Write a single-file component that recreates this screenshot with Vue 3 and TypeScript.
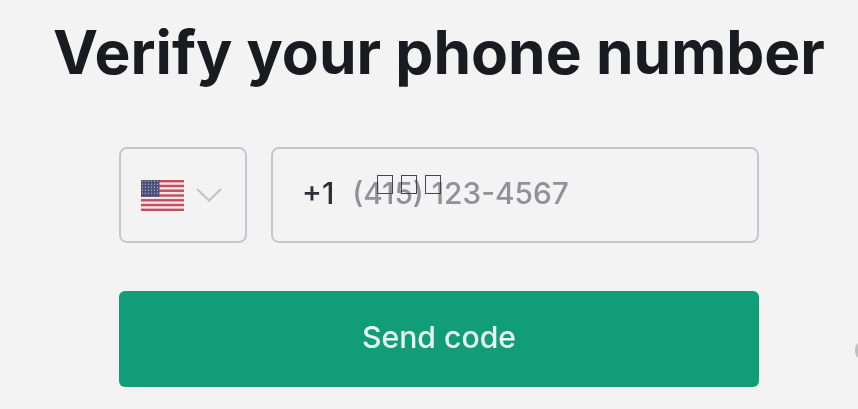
<script setup lang="ts">
const flagStripes: number[] = [0, 2, 4, 6, 8, 10, 12]
const stars: { x: number; y: number }[] = []
for (let r = 0; r < 5; r++) {
  for (let c = 0; c < 6; c++) {
    stars.push({ x: 1.4 + c * 3, y: 1.2 + r * 3 })
  }
}
</script>

<template>
  <main class="page">
    <h1 class="title">Verify your phone number</h1>
    <form class="form" @submit.prevent>
      <div class="row">
        <button type="button" class="country" aria-label="Country">
          <svg class="flag" viewBox="0 0 43 31" width="43" height="31" aria-hidden="true">
            <rect width="43" height="31" fill="#f1e6e8" />
            <rect
              v-for="s in flagStripes"
              :key="s"
              x="0"
              :y="s * 2.385"
              width="43"
              height="2.385"
              fill="#c44d5e"
            />
            <rect width="18.5" height="16.7" fill="#4a4f7c" />
            <circle v-for="(st, i) in stars" :key="i" :cx="st.x" :cy="st.y" r="0.7" fill="#a9abc2" />
          </svg>
          <svg class="chevron" viewBox="0 0 26 14" width="26" height="14" aria-hidden="true">
            <path d="M1 1 L13 12.5 L25 1" fill="none" stroke="#c2c2c8" stroke-width="2" />
          </svg>
        </button>
        <div class="phone">
          <span class="prefix">+1</span>
          <span class="placeholder">(415) 123-4567</span>
          <span class="tofus" aria-hidden="true">
            <i class="tofu"></i>
            <i class="tofu"></i>
            <i class="tofu"></i>
          </span>
        </div>
      </div>
      <button type="submit" class="send">Send code</button>
    </form>
    <span class="dot" aria-hidden="true"></span>
  </main>
</template>

<style>
html,
body {
  margin: 0;
  background: #f3f3f4;
}
</style>

<style scoped>
.page {
  position: relative;
  width: 858px;
  height: 409px;
  overflow: hidden;
  box-sizing: border-box;
  padding-left: 20px;
  display: flex;
  flex-direction: column;
  align-items: center;
  background: #f3f3f4;
  font-family: Inter, "Noto Sans", sans-serif;
  filter: blur(0.7px);
}
.title {
  margin: 16px 0 0;
  font-size: 60.4px;
  line-height: 72px;
  font-weight: 700;
  color: #1a1b20;
  white-space: nowrap;
}
.form {
  width: 640px;
  margin-top: 59px;
  display: flex;
  flex-direction: column;
  gap: 48px;
}
.row {
  display: flex;
  gap: 24px;
}
.country {
  width: 128px;
  height: 96px;
  box-sizing: border-box;
  border: 2px solid #c6c6ce;
  border-radius: 8px;
  background: transparent;
  padding: 0 0 0 20px;
  display: flex;
  align-items: center;
  gap: 12px;
}
.flag {
  flex: none;
}
.phone {
  position: relative;
  flex: 1;
  height: 96px;
  box-sizing: border-box;
  border: 2px solid #c6c6ce;
  border-radius: 8px;
  padding: 0 0 5px 29px;
  display: flex;
  align-items: center;
  gap: 18px;
  font-size: 29.8px;
}
.prefix {
  color: #2d2f36;
  font-weight: 500;
}
.placeholder {
  color: #90919a;
  font-weight: 500;
}
.tofus {
  position: absolute;
  left: 104px;
  top: 26px;
  display: flex;
  gap: 8px;
}
.tofu {
  display: block;
  width: 16px;
  height: 19px;
  box-sizing: border-box;
  border: 1px solid #45464c;
}
.send {
  height: 96px;
  border: none;
  border-radius: 6px;
  background: #109d78;
  color: #e6f5f0;
  font-family: inherit;
  font-size: 30.2px;
  font-weight: 500;
  padding: 0 0 5px;
}
.dot {
  position: absolute;
  right: -5px;
  top: 343px;
  width: 8px;
  height: 15px;
  border-radius: 50%;
  background: #bfbfc1;
}
</style>
